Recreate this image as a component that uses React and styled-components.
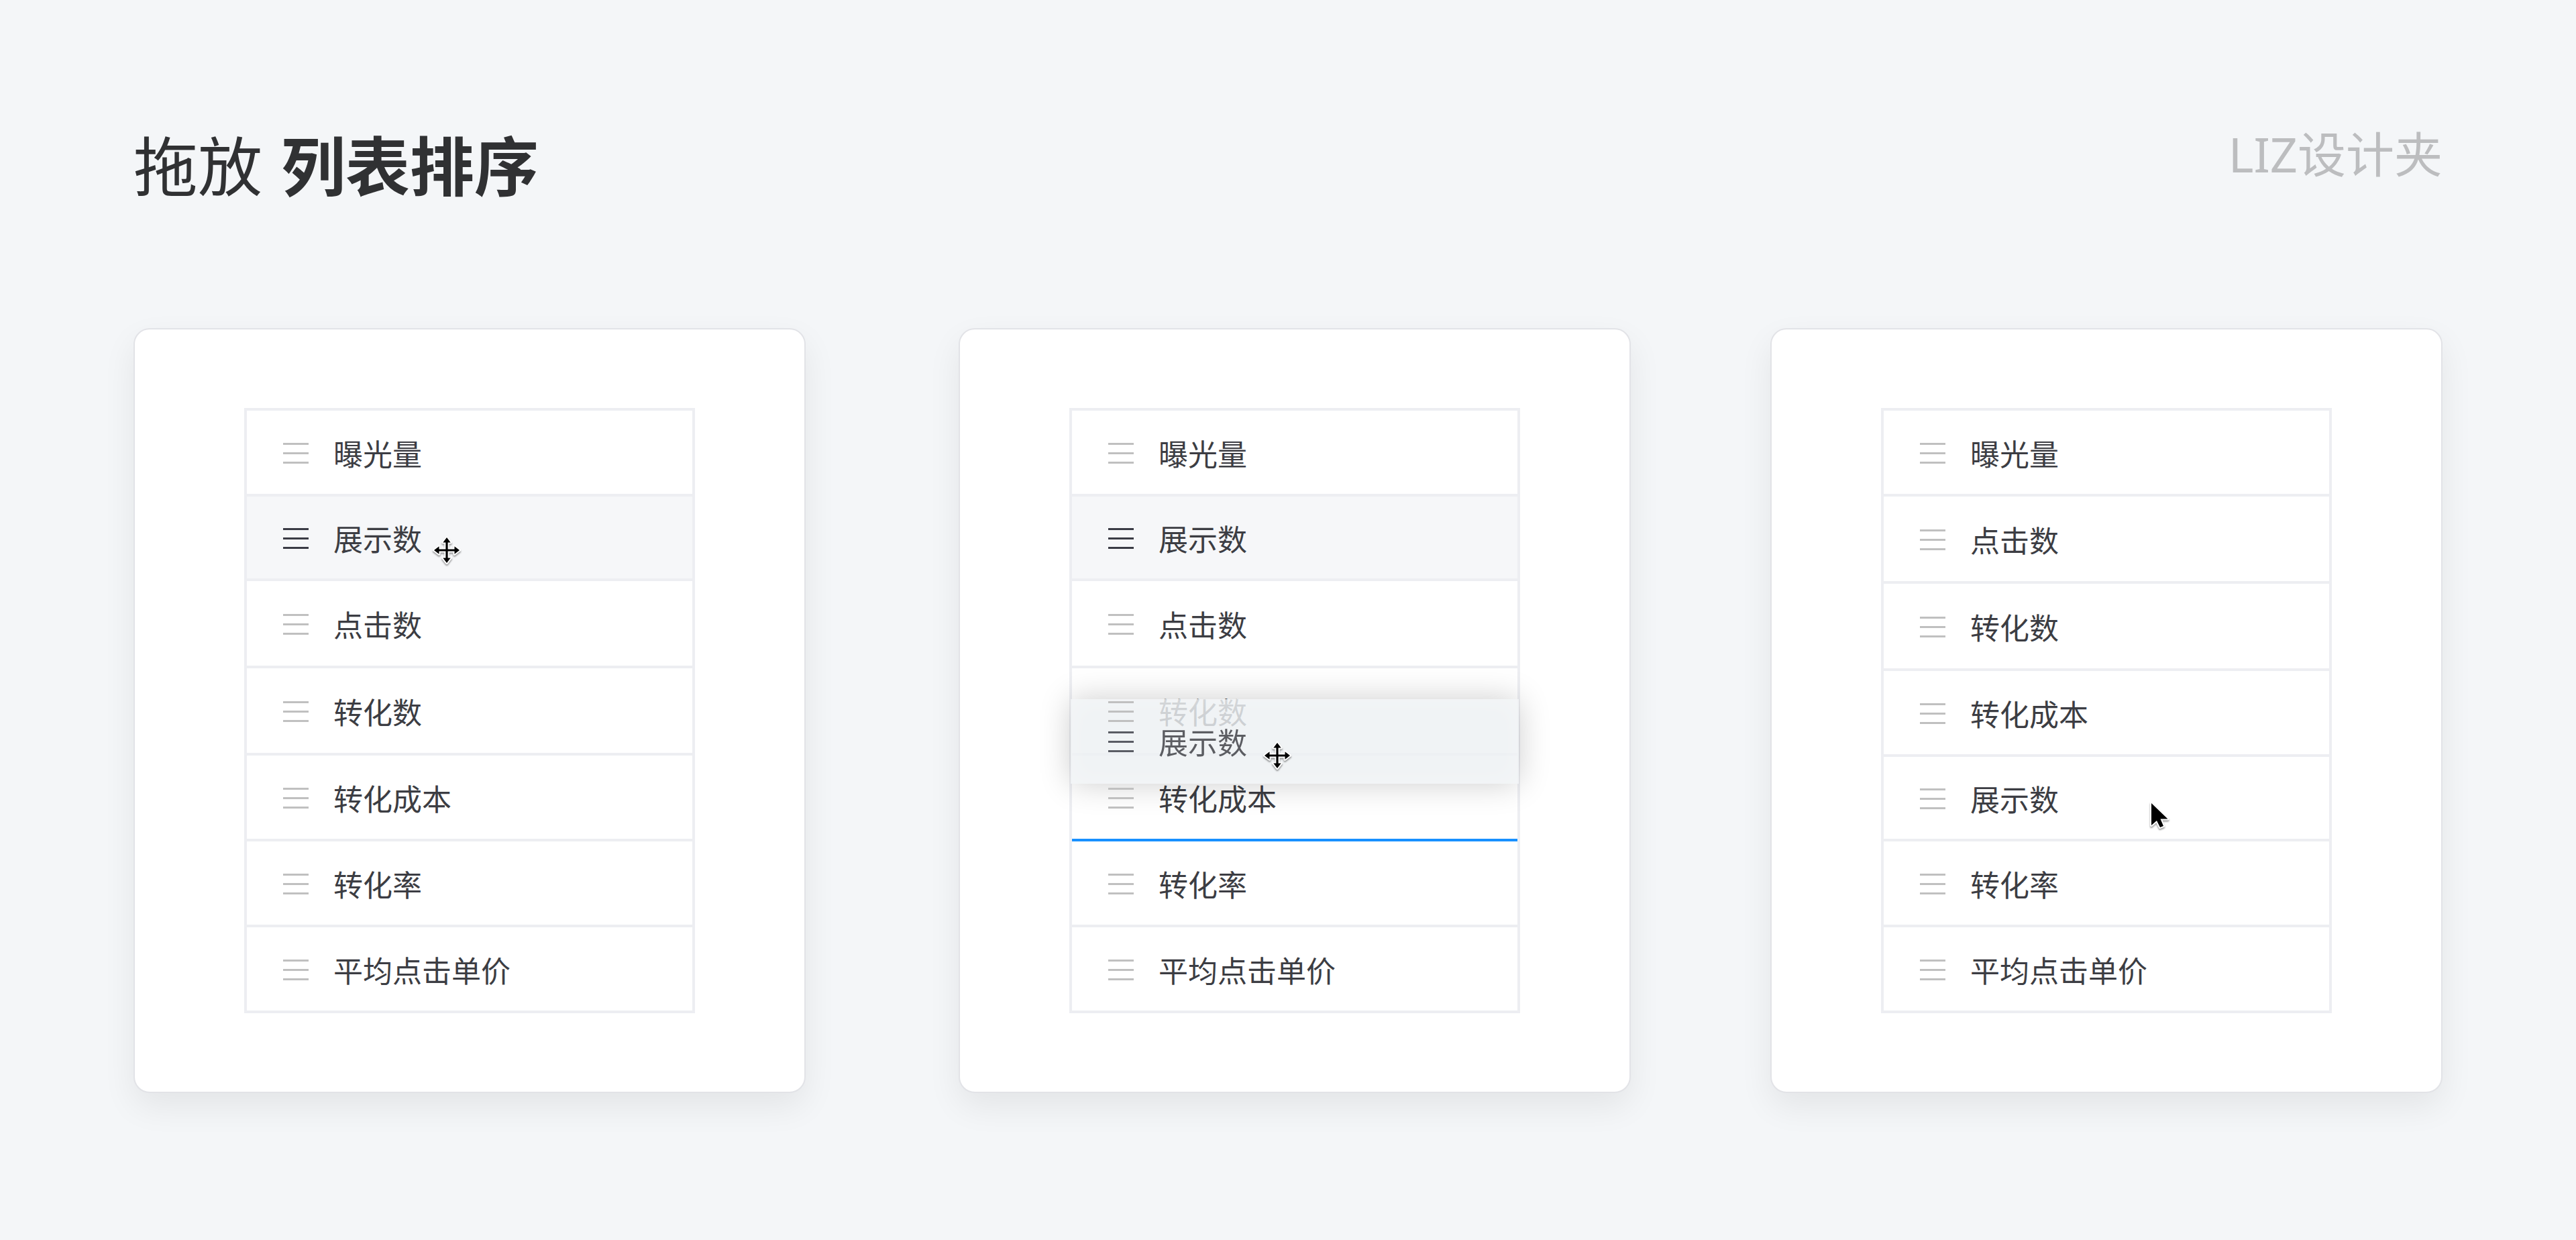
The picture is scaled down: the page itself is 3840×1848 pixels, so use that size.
import styled, { createGlobalStyle, css } from "styled-components";

const colors = {
  page: "#f4f6f8",
  white: "#ffffff",
  line: "#edeef2",
  panelLine: "#e2e3e7",
  hover: "#f6f7f9",
  title: "#303133",
  text: "#3c3d43",
  handle: "#c0c0c0",
  handleActive: "#3a3b45",
  brand: "#bcbdbf",
  drop: "#1890ff",
};

const GlobalStyle = createGlobalStyle`
  * {
    box-sizing: border-box;
  }
  body {
    margin: 0;
    background: ${colors.page};
    font-family: "Noto Sans CJK SC", sans-serif;
  }
`;

const metrics = {
  exposure: { label: "曝光量", height: 124 },
  impressions: { label: "展示数", height: 122 },
  clicks: { label: "点击数", height: 126 },
  conversions: { label: "转化数", height: 126 },
  cost: { label: "转化成本", height: 124 },
  rate: { label: "转化率", height: 124 },
  price: { label: "平均点击单价", height: 124 },
};

const defaultOrder = [
  "exposure",
  "impressions",
  "clicks",
  "conversions",
  "cost",
  "rate",
  "price",
];

const sortedOrder = [
  "exposure",
  "clicks",
  "conversions",
  "cost",
  "impressions",
  "rate",
  "price",
];

function MoveCursor({ x, y }) {
  return (
    <Cursor $x={x - 24} $y={y - 24} width="48" height="48" viewBox="-24 -24 48 48">
      <path
        d="M0-19 5.7-11.5H1.6V-1.6H11.5V-5.7L19 0 11.5 5.7V1.6H1.6V11.5H5.7L0 19-5.7 11.5H-1.6V1.6H-11.5V5.7L-19 0-11.5-5.7V-1.6H-1.6V-11.5H-5.7Z"
        fill="#000"
        stroke="#fff"
        strokeWidth="4"
        strokeLinejoin="round"
        paintOrder="stroke"
      />
    </Cursor>
  );
}

function ArrowCursor({ x, y }) {
  return (
    <Cursor $x={x - 6} $y={y - 6} width="40" height="52" viewBox="-6 -6 40 52">
      <path
        d="M0 0V33L8 26 13 36 18 34 13.5 23.5H24.5Z"
        fill="#000"
        stroke="#fff"
        strokeWidth="4"
        strokeLinejoin="round"
        paintOrder="stroke"
      />
    </Cursor>
  );
}

function DragHandle({ active }) {
  return (
    <Handle type="button" aria-label="拖动排序" $active={active}>
      <Bar />
      <Bar />
      <Bar />
    </Handle>
  );
}

function SortList({ order, active, dropAfter, cursors = {}, children }) {
  return (
    <List>
      {order.map((key) => (
        <Row
          key={key}
          $height={metrics[key].height}
          $active={key === active}
          $drop={key === dropAfter}
        >
          <DragHandle active={key === active} />
          <Label>{metrics[key].label}</Label>
          {cursors[key]}
        </Row>
      ))}
      {children}
    </List>
  );
}

function App() {
  return (
    <Page>
      <GlobalStyle />
      <Header>
        <Title>
          拖放<strong>列表排序</strong>
        </Title>
        <Brand>LIZ设计夹</Brand>
      </Header>
      <Panels>
        <Panel>
          <SortList
            order={defaultOrder}
            active="impressions"
            cursors={{ impressions: <MoveCursor x={298} y={80} /> }}
          />
        </Panel>
        <Panel>
          <SortList order={defaultOrder} active="impressions" dropAfter="cost">
            <Ghost>
              <DragHandle active />
              <Label>{metrics.impressions.label}</Label>
            </Ghost>
            <GhostCursor>
              <MoveCursor x={308} y={84} />
            </GhostCursor>
          </SortList>
        </Panel>
        <Panel>
          <SortList
            order={sortedOrder}
            cursors={{ impressions: <ArrowCursor x={399} y={69} /> }}
          />
        </Panel>
      </Panels>
    </Page>
  );
}

export default App;

const Page = styled.main`
  min-height: 100vh;
  padding: 171px 199px 200px;
`;

const Header = styled.header`
  display: flex;
  align-items: flex-start;
  justify-content: space-between;
  margin-bottom: 174px;
`;

const Title = styled.h1`
  display: flex;
  gap: 28px;
  margin: 0;
  color: ${colors.title};
  font-size: 96px;
  font-weight: 400;
  line-height: 144px;

  & > strong {
    font-weight: 700;
  }
`;

const Brand = styled.p`
  margin: 0;
  color: ${colors.brand};
  font-family: "Noto Sans", "Noto Sans CJK SC", sans-serif;
  font-size: 72px;
  line-height: 116px;
`;

/* the second gutter is a little narrower than the first */
const Panels = styled.div`
  display: grid;
  grid-template-columns: 501fr 114fr 501fr 104fr 501fr;
`;

const Panel = styled.section`
  padding: 117px 163px;
  background: ${colors.white};
  border: 2px solid ${colors.panelLine};
  border-radius: 24px;
  box-shadow: 0 20px 50px rgba(0, 0, 0, 0.07);

  &:nth-child(2) {
    grid-column: 3;
  }
  &:nth-child(3) {
    grid-column: 5;
  }
`;

const List = styled.ul`
  position: relative;
  margin: 0;
  padding: 0;
  list-style: none;
  border: 4px solid ${colors.line};
`;

const rowLayout = css`
  display: flex;
  align-items: center;
  gap: 37px;
`;

const Row = styled.li`
  ${rowLayout}
  position: relative;
  box-sizing: content-box;
  height: ${({ $height }) => $height - 3}px;
  padding: 3px 54px 0;
  background: ${({ $active }) => ($active ? colors.hover : "transparent")};
  border-bottom: 4px solid
    ${({ $drop }) => ($drop ? colors.drop : colors.line)};

  &:nth-child(7) {
    border-bottom: 0;
  }
`;

const Handle = styled.button`
  position: relative;
  z-index: 2;
  display: flex;
  flex-direction: column;
  gap: 11px;
  width: 38px;
  padding: 0;
  border: 0;
  background: none;
  color: ${({ $active }) => ($active ? colors.handleActive : colors.handle)};
  cursor: move;
`;

const Bar = styled.span`
  height: 3px;
  background: currentColor;
`;

const Label = styled.span`
  padding-bottom: 2px;
  color: ${colors.text};
  font-size: 44px;
  line-height: 64px;
`;

/* the row being dragged, floating over the list */
const Ghost = styled.li`
  ${rowLayout}
  position: absolute;
  top: 430px;
  left: -2px;
  right: -2px;
  z-index: 1;
  height: 126px;
  padding: 1px 56px 0;
  background: rgba(237, 240, 243, 0.82);
  box-shadow: 0 0 48px rgba(0, 0, 0, 0.2), inset 0 0 40px rgba(255, 255, 255, 0.3);

  ${Handle}, ${Label} {
    opacity: 0.82;
  }
`;

const GhostCursor = styled.li`
  position: absolute;
  top: 430px;
  left: -2px;
  z-index: 3;
`;

const Cursor = styled.svg`
  position: absolute;
  top: ${({ $y }) => $y}px;
  left: ${({ $x }) => $x}px;
  filter: drop-shadow(0 2px 1px rgba(0, 0, 0, 0.4));
`;
